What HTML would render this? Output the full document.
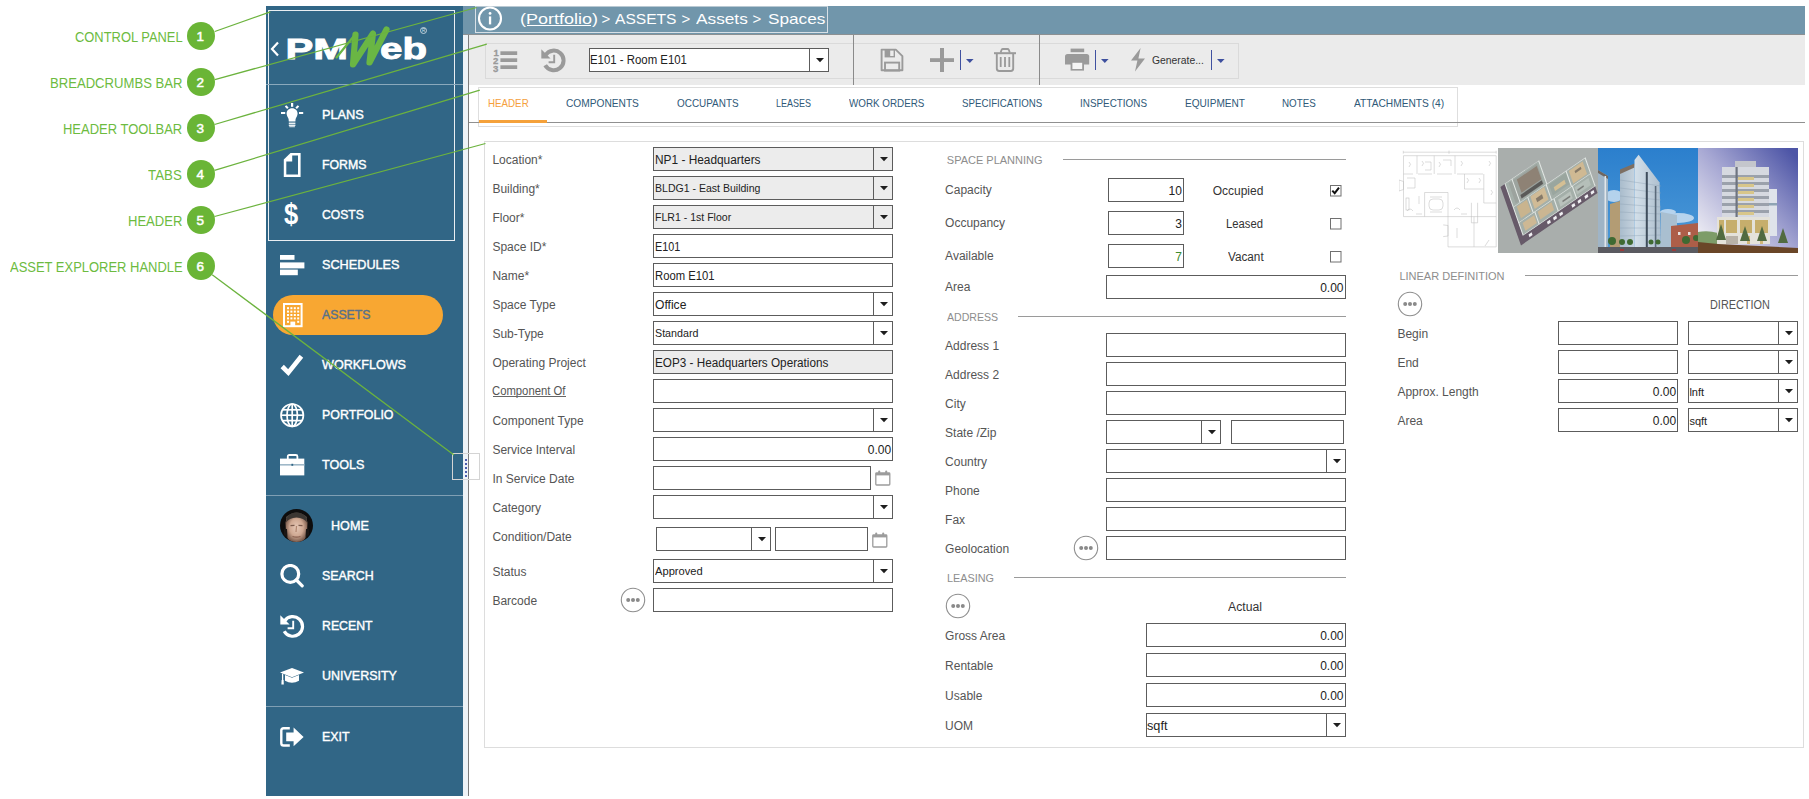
<!DOCTYPE html>
<html><head><meta charset="utf-8"><title>PMWeb Spaces</title>
<style>
*{box-sizing:border-box;margin:0;padding:0}
html,body{width:1809px;height:799px;overflow:hidden;background:#fff;font-family:"Liberation Sans",sans-serif}
.a{position:absolute}
.t{position:absolute;white-space:pre;font-family:"Liberation Sans",sans-serif}
svg{display:block}
</style></head><body>
<div class="t" style="font-size:14px;font-weight:normal;color:#6dbb3f;line-height:16px;top:29.45px;transform:scaleX(0.9223);transform-origin:0 50%;left:74.50px;">CONTROL PANEL</div>
<div class="t" style="font-size:14px;font-weight:normal;color:#6dbb3f;line-height:16px;top:75.45px;transform:scaleX(0.9354);transform-origin:0 50%;left:49.70px;">BREADCRUMBS BAR</div>
<div class="t" style="font-size:14px;font-weight:normal;color:#6dbb3f;line-height:16px;top:121.45px;transform:scaleX(0.9269);transform-origin:0 50%;left:62.90px;">HEADER TOOLBAR</div>
<div class="t" style="font-size:14px;font-weight:normal;color:#6dbb3f;line-height:16px;top:167.45px;transform:scaleX(0.9503);transform-origin:0 50%;left:148.40px;">TABS</div>
<div class="t" style="font-size:14px;font-weight:normal;color:#6dbb3f;line-height:16px;top:213.45px;transform:scaleX(0.9312);transform-origin:0 50%;left:127.80px;">HEADER</div>
<div class="t" style="font-size:14px;font-weight:normal;color:#6dbb3f;line-height:16px;top:259.45px;transform:scaleX(0.9257);transform-origin:0 50%;left:9.50px;">ASSET EXPLORER HANDLE</div>
<div class="a" style="left:187px;top:21.9px;width:28px;height:28px;border-radius:50%;background:#6ab536"></div>
<div class="t" style="font-size:13.5px;font-weight:normal;color:#fff;line-height:16px;top:29.34px;left:196.60px;-webkit-text-stroke:0.5px #fff;">1</div>
<div class="a" style="left:187px;top:67.9px;width:28px;height:28px;border-radius:50%;background:#6ab536"></div>
<div class="t" style="font-size:13.5px;font-weight:normal;color:#fff;line-height:16px;top:75.34px;left:196.60px;-webkit-text-stroke:0.5px #fff;">2</div>
<div class="a" style="left:187px;top:113.9px;width:28px;height:28px;border-radius:50%;background:#6ab536"></div>
<div class="t" style="font-size:13.5px;font-weight:normal;color:#fff;line-height:16px;top:121.34px;left:196.60px;-webkit-text-stroke:0.5px #fff;">3</div>
<div class="a" style="left:187px;top:159.9px;width:28px;height:28px;border-radius:50%;background:#6ab536"></div>
<div class="t" style="font-size:13.5px;font-weight:normal;color:#fff;line-height:16px;top:167.34px;left:196.60px;-webkit-text-stroke:0.5px #fff;">4</div>
<div class="a" style="left:187px;top:205.9px;width:28px;height:28px;border-radius:50%;background:#6ab536"></div>
<div class="t" style="font-size:13.5px;font-weight:normal;color:#fff;line-height:16px;top:213.34px;left:196.60px;-webkit-text-stroke:0.5px #fff;">5</div>
<div class="a" style="left:187px;top:251.89999999999998px;width:28px;height:28px;border-radius:50%;background:#6ab536"></div>
<div class="t" style="font-size:13.5px;font-weight:normal;color:#fff;line-height:16px;top:259.34px;left:196.60px;-webkit-text-stroke:0.5px #fff;">6</div>
<div class="a" style="left:266px;top:6px;width:197.8px;height:790px;background:#316686;"></div>
<div class="a" style="left:267.5px;top:10px;width:187.5px;height:230.5px;background:transparent;border:1.2px solid #e9eef2;"></div>
<div class="a" style="left:266px;top:84px;width:197px;height:1px;background:#8aa9bc;"></div>
<div class="a" style="left:266px;top:495px;width:197px;height:1px;background:#7f9fb4;"></div>
<div class="a" style="left:266px;top:706px;width:197px;height:1px;background:#7f9fb4;"></div>
<svg class="a" style="left:269.5px;top:41.3px;" width="10" height="16" viewBox="0 0 10 16"><path d="M8 1.5 L2 8 L8 14.5" fill="none" stroke="#ffffff" stroke-width="2.2"/></svg>
<svg class="a" style="left:286.5px;top:37px;overflow:visible" width="145" height="40" viewBox="0 0 145 40"><text x="-1.6" y="22" font-family="Liberation Sans" font-weight="bold" font-size="30" fill="#ffffff" stroke="#ffffff" stroke-width="0.9" textLength="62.5" lengthAdjust="spacingAndGlyphs">PM</text>
<path d="M49.5 20.5 L68.5 -3" stroke="#6ab644" stroke-width="2.2" fill="none" stroke-linecap="round"/>
<path d="M68.5 -2.5 L66 27.5 L86 -3.5 L82.5 25.5 L99.5 -7.5" stroke="#6ab644" stroke-width="6.2" fill="none" stroke-linejoin="round" stroke-linecap="round"/>
<text x="93" y="22" font-family="Liberation Sans" font-weight="bold" font-size="30" fill="#ffffff" stroke="#ffffff" stroke-width="0.9" textLength="47" lengthAdjust="spacingAndGlyphs">eb</text>
<circle cx="136.5" cy="-6.5" r="3" fill="none" stroke="#dfe8ee" stroke-width="0.8"/>
<text x="136.5" y="-4.8" text-anchor="middle" font-family="Liberation Sans" font-size="4.5" fill="#dfe8ee">R</text></svg>
<div class="a" style="left:273px;top:295px;width:170px;height:40px;border-radius:20px;background:#f8a732"></div>
<svg class="a" style="left:278px;top:100px;" width="28" height="30" viewBox="0 0 28 30"><g fill="#ffffff" stroke="none">
<rect x="13" y="3" width="2.2" height="3.8"/>
<rect x="3" y="12" width="4.2" height="2"/>
<rect x="21" y="12" width="4.2" height="2"/>
<path d="M6.8 6.6 L8.3 5.2 L10.6 7.6 L9.1 9 Z"/>
<path d="M21.2 6.6 L19.7 5.2 L17.4 7.6 L18.9 9 Z"/>
<path d="M14.1 8.2 C10.9 8.2 8.6 10.6 8.6 13.6 C8.6 16.0 10.0 17.3 10.6 19.0 L10.8 21.5 L17.4 21.5 L17.6 19.0 C18.2 17.3 19.6 16.0 19.6 13.6 C19.6 10.6 17.3 8.2 14.1 8.2 Z"/>
<rect x="10.8" y="22.6" width="6.6" height="1.3"/>
<rect x="10.8" y="24.6" width="6.6" height="1.3"/>
<rect x="11.3" y="26.3" width="5.6" height="0.9"/>
</g></svg>
<svg class="a" style="left:280px;top:150px;" width="24" height="30" viewBox="0 0 24 30"><path d="M3.8 9.4 L10.5 3 L20.6 3 L20.6 27.1 L3.8 27.1 Z" fill="#ffffff"/>
<path d="M12.2 5.6 L18 5.6 L18 24.4 L6.3 24.4 L6.3 11.6 L12.2 11.6 Z" fill="#316686"/></svg>
<svg class="a" style="left:279px;top:200px;" width="24" height="30" viewBox="0 0 24 30"><text x="12" y="24" text-anchor="middle" font-family="Liberation Sans" font-weight="bold" font-size="30" fill="#ffffff" transform="translate(12 0) scale(0.85 1) translate(-12 0)">$</text></svg>
<svg class="a" style="left:279.7px;top:254.6px;" width="25" height="21" viewBox="0 0 25 21"><g fill="#ffffff"><rect x="0" y="0" width="14.5" height="4.8"/><rect x="0" y="7.4" width="24.4" height="6"/><rect x="0" y="14.6" width="17.8" height="5.6"/></g></svg>
<svg class="a" style="left:282.8px;top:302.9px;" width="20" height="25" viewBox="0 0 20 25"><rect x="1" y="1" width="17.6" height="22.2" fill="none" stroke="#ffffff" stroke-width="2"/>
<g fill="#ffffff"><rect x="4.0" y="4.2" width="2" height="2"/><rect x="7.4" y="4.2" width="2" height="2"/><rect x="10.8" y="4.2" width="2" height="2"/><rect x="14.2" y="4.2" width="2" height="2"/><rect x="4.0" y="7.6" width="2" height="2"/><rect x="7.4" y="7.6" width="2" height="2"/><rect x="10.8" y="7.6" width="2" height="2"/><rect x="14.2" y="7.6" width="2" height="2"/><rect x="4.0" y="11.0" width="2" height="2"/><rect x="7.4" y="11.0" width="2" height="2"/><rect x="10.8" y="11.0" width="2" height="2"/><rect x="14.2" y="11.0" width="2" height="2"/><rect x="4.0" y="14.4" width="2" height="2"/><rect x="7.4" y="14.4" width="2" height="2"/><rect x="10.8" y="14.4" width="2" height="2"/><rect x="14.2" y="14.4" width="2" height="2"/><rect x="4.0" y="17.8" width="2" height="2"/><rect x="14.2" y="17.8" width="2" height="2"/><rect x="7.4" y="18.6" width="4.8" height="5"/></g></svg>
<svg class="a" style="left:279.5px;top:353px;" width="24" height="24" viewBox="0 0 24 24"><path d="M2.2 13.5 L8.3 19.6 L21.4 3.2" fill="none" stroke="#ffffff" stroke-width="4.6" stroke-linejoin="miter" stroke-linecap="butt"/></svg>
<svg class="a" style="left:279.8px;top:402.8px;" width="25" height="25" viewBox="0 0 25 25"><g fill="none" stroke="#ffffff" stroke-width="1.7">
<circle cx="12.2" cy="12.2" r="11.2"/>
<ellipse cx="12.2" cy="12.2" rx="5.2" ry="11.2"/>
<line x1="12.2" y1="1" x2="12.2" y2="23.4"/>
<line x1="1" y1="12.2" x2="23.4" y2="12.2"/>
<line x1="2.6" y1="6.8" x2="21.8" y2="6.8"/>
<line x1="2.6" y1="17.6" x2="21.8" y2="17.6"/>
</g></svg>
<svg class="a" style="left:279.9px;top:454.2px;" width="25" height="22" viewBox="0 0 25 22"><path d="M7.8 5 L7.8 2.5 Q7.8 1 9.3 1 L15.9 1 Q17.4 1 17.4 2.5 L17.4 5" fill="none" stroke="#ffffff" stroke-width="1.8"/>
<rect x="0" y="4.6" width="24.3" height="16.8" fill="#ffffff"/>
<rect x="0" y="10" width="24.3" height="1.6" fill="#9fb8c8"/>
<rect x="11.4" y="9.8" width="1.8" height="2" fill="#316686"/></svg>
<svg class="a" style="left:280px;top:508.8px;" width="33" height="33" viewBox="0 0 33 33"><defs><radialGradient id="face" cx="50%" cy="45%" r="55%"><stop offset="0" stop-color="#e6c8b6"/><stop offset="0.55" stop-color="#cfa892"/><stop offset="1" stop-color="#6e5042"/></radialGradient>
<clipPath id="avc"><circle cx="16.5" cy="16.5" r="16.5"/></clipPath></defs>
<g clip-path="url(#avc)">
<rect width="33" height="33" fill="#0e0d0d"/>
<path d="M6 8 Q16.5 -1 27 8 L26 14 Q16.5 6 7 14 Z" fill="#4a4540"/>
<path d="M5.5 14 Q5 6.5 16.5 5.8 Q28 6.5 27.5 14 L27 24 Q26 33 16.5 34 Q7 33 6 24 Z" fill="url(#face)"/>
<path d="M6 13.5 Q6 4 16.5 3.5 Q27 4 27 13.5 Q24 9 16.5 8.6 Q9 9 6 13.5Z" fill="#3b3632"/>
<path d="M10.5 16.6 L14.5 16.4 M18.5 16.4 L22.5 16.6" stroke="#7a5a4c" stroke-width="1.2"/>
<path d="M16.5 17 L16 23" stroke="#b08670" stroke-width="1.2"/>
<path d="M12.5 27.5 Q16.5 28.8 20.5 27.5" stroke="#8a6050" stroke-width="1.2" fill="none"/>
<path d="M4 20 L7 20 L7.5 28 L4 26Z M29 20 L26 20 L25.5 28 L29 26Z" fill="#1a1614"/>
</g></svg>
<svg class="a" style="left:280px;top:564px;" width="24" height="24" viewBox="0 0 24 24"><circle cx="10.3" cy="9.9" r="8.4" fill="none" stroke="#ffffff" stroke-width="3.2"/>
<line x1="16.4" y1="16" x2="22.2" y2="21.8" stroke="#ffffff" stroke-width="3.2" stroke-linecap="round"/></svg>
<svg class="a" style="left:279.8px;top:614.3px;" width="25" height="25" viewBox="0 0 25 25"><path d="M4.6 7.0 A9.8 9.8 0 1 1 4.2 17.2" fill="none" stroke="#ffffff" stroke-width="3.2"/>
<path d="M0.3 1.2 L0.3 10.4 L9.6 10.4 Z" fill="#ffffff"/>
<path d="M13.2 6.8 L13.2 14.2 L7.6 14.2" fill="none" stroke="#ffffff" stroke-width="1.9"/></svg>
<svg class="a" style="left:280px;top:667.8px;" width="24" height="17" viewBox="0 0 24 17"><path d="M0 4.6 L12 0 L24 4.6 L12 9.2 Z" fill="#ffffff"/>
<path d="M5 7 L5 12.8 Q12 16.8 19 12.8 L19 7 L12 9.8 Z" fill="#ffffff"/>
<path d="M2.6 5.6 L2.6 12.6" stroke="#ffffff" stroke-width="1.3"/>
<path d="M1.6 12 L3.6 12 L3.8 16.4 L1.4 16.4 Z" fill="#ffffff"/></svg>
<svg class="a" style="left:280px;top:727px;" width="24" height="20" viewBox="0 0 24 20"><path d="M9.8 1.3 L3.6 1.3 Q1.3 1.3 1.3 3.6 L1.3 16.2 Q1.3 18.5 3.6 18.5 L9.8 18.5" fill="none" stroke="#ffffff" stroke-width="2.4"/>
<path d="M6.2 5.6 L13.6 5.6 L13.6 0.6 L23.6 9.9 L13.6 19.2 L13.6 14.2 L6.2 14.2 Z" fill="#ffffff"/></svg>
<div class="t" style="font-size:12.8px;font-weight:normal;color:#fff;line-height:16px;top:106.73px;left:321.90px;-webkit-text-stroke:0.4px #fff;">PLANS</div>
<div class="t" style="font-size:12.8px;font-weight:normal;color:#fff;line-height:16px;top:156.73px;transform:scaleX(0.9625);transform-origin:0 50%;left:321.90px;-webkit-text-stroke:0.4px #fff;">FORMS</div>
<div class="t" style="font-size:12.8px;font-weight:normal;color:#fff;line-height:16px;top:206.53px;transform:scaleX(0.9473);transform-origin:0 50%;left:321.90px;-webkit-text-stroke:0.4px #fff;">COSTS</div>
<div class="t" style="font-size:12.8px;font-weight:normal;color:#fff;line-height:16px;top:256.73px;transform:scaleX(0.9908);transform-origin:0 50%;left:321.90px;-webkit-text-stroke:0.4px #fff;">SCHEDULES</div>
<div class="t" style="font-size:12.8px;font-weight:normal;color:#56708c;line-height:16px;top:306.73px;transform:scaleX(0.9601);transform-origin:0 50%;left:321.90px;-webkit-text-stroke:0.4px #56708c;">ASSETS</div>
<div class="t" style="font-size:12.8px;font-weight:normal;color:#fff;line-height:16px;top:356.73px;transform:scaleX(0.9847);transform-origin:0 50%;left:321.90px;-webkit-text-stroke:0.4px #fff;">WORKFLOWS</div>
<div class="t" style="font-size:12.8px;font-weight:normal;color:#fff;line-height:16px;top:406.73px;transform:scaleX(0.9698);transform-origin:0 50%;left:321.90px;-webkit-text-stroke:0.4px #fff;">PORTFOLIO</div>
<div class="t" style="font-size:12.8px;font-weight:normal;color:#fff;line-height:16px;top:456.73px;transform:scaleX(0.9850);transform-origin:0 50%;left:321.90px;-webkit-text-stroke:0.4px #fff;">TOOLS</div>
<div class="t" style="font-size:12.8px;font-weight:normal;color:#fff;line-height:16px;top:517.63px;transform:scaleX(0.9844);transform-origin:0 50%;left:331.20px;-webkit-text-stroke:0.4px #fff;">HOME</div>
<div class="t" style="font-size:12.8px;font-weight:normal;color:#fff;line-height:16px;top:567.73px;transform:scaleX(0.9710);transform-origin:0 50%;left:321.80px;-webkit-text-stroke:0.4px #fff;">SEARCH</div>
<div class="t" style="font-size:12.8px;font-weight:normal;color:#fff;line-height:16px;top:617.83px;transform:scaleX(0.9612);transform-origin:0 50%;left:321.80px;-webkit-text-stroke:0.4px #fff;">RECENT</div>
<div class="t" style="font-size:12.8px;font-weight:normal;color:#fff;line-height:16px;top:667.93px;transform:scaleX(0.9753);transform-origin:0 50%;left:321.80px;-webkit-text-stroke:0.4px #fff;">UNIVERSITY</div>
<div class="t" style="font-size:12.8px;font-weight:normal;color:#fff;line-height:16px;top:728.73px;transform:scaleX(0.9698);transform-origin:0 50%;left:321.80px;-webkit-text-stroke:0.4px #fff;">EXIT</div>
<div class="a" style="left:463.2px;top:35px;width:4.8px;height:761px;background:#eef3f7;"></div>
<div class="a" style="left:468px;top:35px;width:1px;height:761px;background:#7d7d7d;"></div>
<div class="a" style="left:463px;top:6px;width:1342px;height:28.5px;background:#7196ab;"></div>
<div class="a" style="left:463px;top:34px;width:1342px;height:1px;background:#8c9092;"></div>
<div class="a" style="left:474.5px;top:6px;width:353.5px;height:27px;background:transparent;border:1px solid #d8e0e6;border-top-color:#b9c9d3"></div>
<svg class="a" style="left:477px;top:5.5px" width="26" height="26"><circle cx="13" cy="12.5" r="11" fill="none" stroke="#fff" stroke-width="2.1"/><rect x="11.9" y="10.4" width="2.3" height="8" fill="#fff"/><circle cx="13.05" cy="7.4" r="1.4" fill="#fff"/></svg>
<div class="t" style="font-size:15px;font-weight:normal;color:#ffffff;line-height:16px;top:11.27px;transform:scaleX(1.1985);transform-origin:0 50%;left:519.90px;">(Portfolio)</div>
<div class="a" style="left:527px;top:25px;width:64px;height:1.2px;background:#fff"></div>
<div class="t" style="font-size:15px;font-weight:normal;color:#ffffff;line-height:16px;top:11.27px;left:601.40px;">&gt;</div>
<div class="t" style="font-size:15px;font-weight:normal;color:#ffffff;line-height:16px;top:11.27px;transform:scaleX(1.0382);transform-origin:0 50%;left:615.20px;">ASSETS</div>
<div class="t" style="font-size:15px;font-weight:normal;color:#ffffff;line-height:16px;top:11.27px;left:681.40px;">&gt;</div>
<div class="t" style="font-size:15px;font-weight:normal;color:#ffffff;line-height:16px;top:11.27px;transform:scaleX(1.1503);transform-origin:0 50%;left:696.00px;">Assets</div>
<div class="t" style="font-size:15px;font-weight:normal;color:#ffffff;line-height:16px;top:11.27px;left:752.40px;">&gt;</div>
<div class="t" style="font-size:15px;font-weight:normal;color:#ffffff;line-height:16px;top:11.27px;transform:scaleX(1.1464);transform-origin:0 50%;left:767.70px;">Spaces</div>
<div class="a" style="left:469px;top:35px;width:1336px;height:50px;background:#ebebeb;"></div>
<div class="a" style="left:485.4px;top:43.3px;width:753.6px;height:36px;background:transparent;border:1px solid #dadada;"></div>
<div class="a" style="left:853px;top:35px;width:1px;height:50px;background:#8a8a8a;"></div>
<div class="a" style="left:1038.5px;top:35px;width:1px;height:50px;background:#8a8a8a;"></div>
<svg class="a" style="left:493px;top:48px;" width="25" height="25" viewBox="0 0 25 25"><g fill="#9a9a9a" font-family="Liberation Sans" font-weight="bold" font-size="9.6" stroke="#9a9a9a" stroke-width="0.3">
<text x="0.6" y="7.6">1</text>
<text x="0" y="15.6">2</text>
<text x="0" y="23.8">3</text>
</g>
<g fill="#9a9a9a">
<rect x="7.4" y="3.3" width="16.8" height="3.7"/>
<rect x="7.4" y="10.3" width="16.8" height="3.7"/>
<rect x="7.4" y="17.3" width="16.8" height="3.7"/>
</g></svg>
<svg class="a" style="left:541px;top:47.6px;" width="25" height="25" viewBox="0 0 25 25"><path d="M4.6 7.0 A9.8 9.8 0 1 1 4.2 17.2" fill="none" stroke="#9a9a9a" stroke-width="4"/>
<path d="M0.3 1.2 L0.3 10.4 L9.6 10.4 Z" fill="#9a9a9a"/>
<path d="M13.2 6.8 L13.2 14.2 L7.6 14.2" fill="none" stroke="#9a9a9a" stroke-width="1.9"/></svg>
<div class="a" style="left:589px;top:48px;width:240px;height:24px;background:#fff;border:1px solid #5c5c5c"></div>
<div class="a" style="left:809px;top:48px;width:1px;height:24px;background:#5c5c5c"></div>
<svg class="a" style="left:815.5px;top:58px" width="8" height="5"><path d="M0 0 L8 0 L4 4.2 Z" fill="#1e1e1e"/></svg>
<div class="t" style="font-size:12px;font-weight:normal;color:#222;line-height:16px;top:52.22px;transform:scaleX(0.9495);transform-origin:0 50%;left:590.40px;">E101 - Room E101</div>
<svg class="a" style="left:880px;top:48px;" width="24" height="24" viewBox="0 0 24 24"><path d="M1.6 1.6 L15.8 1.6 L22.4 8.2 L22.4 22.2 L1.6 22.2 Z" fill="none" stroke="#9a9a9a" stroke-width="1.9" stroke-linejoin="round"/>
<path d="M4.6 1.6 L15 1.6 L15 9.4 L4.6 9.4 Z" fill="#9a9a9a"/>
<rect x="10.2" y="2.6" width="3.4" height="5.4" fill="#ececec"/>
<rect x="5" y="14.6" width="14.2" height="8" fill="none" stroke="#9a9a9a" stroke-width="1.9"/></svg>
<svg class="a" style="left:930px;top:48px;" width="24" height="24" viewBox="0 0 24 24"><rect x="10" y="0" width="4" height="24" fill="#9a9a9a"/><rect x="0" y="10.2" width="24" height="3.8" fill="#9a9a9a"/></svg>
<div class="a" style="left:960px;top:50px;width:1.2px;height:20px;background:#3f51a0"></div><svg class="a" style="left:966.4px;top:59px" width="8" height="4"><path d="M0 0 L7.6 0 L3.8 4 Z" fill="#3d4f9e"/></svg>
<svg class="a" style="left:994px;top:48.4px;" width="22" height="24" viewBox="0 0 22 24"><path d="M6.6 4.6 L7.6 1.8 Q8 1 9 1 L13.4 1 Q14.4 1 14.8 1.8 L15.8 4.6" fill="none" stroke="#9a9a9a" stroke-width="1.8"/>
<rect x="0" y="4.2" width="22" height="2" fill="#9a9a9a"/>
<path d="M2.8 6 L2.8 20.6 Q2.8 23 5.2 23 L16.8 23 Q19.2 23 19.2 20.6 L19.2 6" fill="none" stroke="#9a9a9a" stroke-width="1.9"/>
<rect x="5.8" y="9" width="1.8" height="10" fill="#9a9a9a"/><rect x="10.1" y="9" width="1.8" height="10" fill="#9a9a9a"/><rect x="14.4" y="9" width="1.8" height="10" fill="#9a9a9a"/></svg>
<svg class="a" style="left:1064.8px;top:48.4px;" width="25" height="24" viewBox="0 0 25 24"><rect x="5.6" y="0.6" width="13.6" height="3.6" fill="#9a9a9a"/>
<path d="M0 8.6 Q0 6 2.6 6 L21.6 6 Q24.2 6 24.2 8.6 L24.2 16.6 L0 16.6 Z" fill="#9a9a9a"/>
<rect x="5.6" y="13.2" width="13.4" height="9.4" fill="#9a9a9a"/>
<rect x="7.4" y="14.8" width="9.8" height="6.2" fill="#f4f4f4"/></svg>
<div class="a" style="left:1095px;top:50px;width:1.2px;height:20px;background:#3f51a0"></div><svg class="a" style="left:1101.4px;top:59px" width="8" height="4"><path d="M0 0 L7.6 0 L3.8 4 Z" fill="#3d4f9e"/></svg>
<svg class="a" style="left:1131px;top:48.2px;" width="15" height="24" viewBox="0 0 15 24"><path d="M9.6 0 L0 12.4 L6.4 12.4 L4 23.4 L14 10.6 L7.4 10.6 Z" fill="#9a9a9a"/></svg>
<div class="t" style="font-size:11.5px;font-weight:normal;color:#333;line-height:16px;top:52.21px;transform:scaleX(0.9006);transform-origin:0 50%;left:1152.40px;">Generate...</div>
<div class="a" style="left:1211px;top:50px;width:1.2px;height:20px;background:#3f51a0"></div><svg class="a" style="left:1217.4px;top:59px" width="8" height="4"><path d="M0 0 L7.6 0 L3.8 4 Z" fill="#3d4f9e"/></svg>
<div class="a" style="left:478.3px;top:87px;width:980px;height:40px;background:#fff;border:1px solid #dedede;"></div>
<div class="a" style="left:469px;top:122px;width:1336px;height:1.3px;background:#909090;"></div>
<div class="a" style="left:479px;top:119.5px;width:68px;height:3px;background:#f5a13a;"></div>
<div class="t" style="font-size:11px;font-weight:normal;color:#f5a03c;line-height:16px;top:95.20px;transform:scaleX(0.8874);transform-origin:0 50%;left:487.70px;">HEADER</div>
<div class="t" style="font-size:11px;font-weight:normal;color:#2f5978;line-height:16px;top:95.20px;transform:scaleX(0.9248);transform-origin:0 50%;left:565.90px;">COMPONENTS</div>
<div class="t" style="font-size:11px;font-weight:normal;color:#2f5978;line-height:16px;top:95.20px;transform:scaleX(0.9025);transform-origin:0 50%;left:676.70px;">OCCUPANTS</div>
<div class="t" style="font-size:11px;font-weight:normal;color:#2f5978;line-height:16px;top:95.20px;transform:scaleX(0.8204);transform-origin:0 50%;left:776.00px;">LEASES</div>
<div class="t" style="font-size:11px;font-weight:normal;color:#2f5978;line-height:16px;top:95.20px;transform:scaleX(0.8938);transform-origin:0 50%;left:848.80px;">WORK ORDERS</div>
<div class="t" style="font-size:11px;font-weight:normal;color:#2f5978;line-height:16px;top:95.20px;transform:scaleX(0.8823);transform-origin:0 50%;left:962.00px;">SPECIFICATIONS</div>
<div class="t" style="font-size:11px;font-weight:normal;color:#2f5978;line-height:16px;top:95.20px;transform:scaleX(0.8983);transform-origin:0 50%;left:1079.70px;">INSPECTIONS</div>
<div class="t" style="font-size:11px;font-weight:normal;color:#2f5978;line-height:16px;top:95.20px;transform:scaleX(0.9175);transform-origin:0 50%;left:1184.70px;">EQUIPMENT</div>
<div class="t" style="font-size:11px;font-weight:normal;color:#2f5978;line-height:16px;top:95.20px;transform:scaleX(0.8913);transform-origin:0 50%;left:1282.20px;">NOTES</div>
<div class="t" style="font-size:11px;font-weight:normal;color:#2f5978;line-height:16px;top:95.20px;transform:scaleX(0.9254);transform-origin:0 50%;left:1353.60px;">ATTACHMENTS (4)</div>
<div class="a" style="left:484px;top:141px;width:1320px;height:607px;background:#fff;border:1px solid #dddddd;"></div>
<div class="t" style="font-size:12px;font-weight:normal;color:#555;line-height:16px;top:151.72px;left:492.40px;">Location*</div>
<div class="a" style="left:653px;top:147px;width:240px;height:24px;background:#ececec;border:1px solid #5c5c5c"></div>
<div class="a" style="left:873px;top:147px;width:1px;height:24px;background:#5c5c5c"></div>
<svg class="a" style="left:879.5px;top:157px" width="8" height="5"><path d="M0 0 L8 0 L4 4.2 Z" fill="#1e1e1e"/></svg>
<div class="t" style="font-size:12px;font-weight:normal;color:#222;line-height:16px;top:151.72px;transform:scaleX(0.9890);transform-origin:0 50%;left:654.80px;">NP1 - Headquarters</div>
<div class="t" style="font-size:12px;font-weight:normal;color:#555;line-height:16px;top:180.72px;left:492.40px;">Building*</div>
<div class="a" style="left:653px;top:176px;width:240px;height:24px;background:#ececec;border:1px solid #5c5c5c"></div>
<div class="a" style="left:873px;top:176px;width:1px;height:24px;background:#5c5c5c"></div>
<svg class="a" style="left:879.5px;top:186px" width="8" height="5"><path d="M0 0 L8 0 L4 4.2 Z" fill="#1e1e1e"/></svg>
<div class="t" style="font-size:11px;font-weight:normal;color:#222;line-height:16px;top:180.20px;transform:scaleX(0.9580);transform-origin:0 50%;left:654.80px;">BLDG1 - East Building</div>
<div class="t" style="font-size:12px;font-weight:normal;color:#555;line-height:16px;top:209.72px;left:492.40px;">Floor*</div>
<div class="a" style="left:653px;top:205px;width:240px;height:24px;background:#ececec;border:1px solid #5c5c5c"></div>
<div class="a" style="left:873px;top:205px;width:1px;height:24px;background:#5c5c5c"></div>
<svg class="a" style="left:879.5px;top:215px" width="8" height="5"><path d="M0 0 L8 0 L4 4.2 Z" fill="#1e1e1e"/></svg>
<div class="t" style="font-size:11px;font-weight:normal;color:#222;line-height:16px;top:209.20px;transform:scaleX(0.9582);transform-origin:0 50%;left:654.80px;">FLR1 - 1st Floor</div>
<div class="t" style="font-size:12px;font-weight:normal;color:#555;line-height:16px;top:238.72px;left:492.40px;">Space ID*</div>
<div class="a" style="left:653px;top:234px;width:240px;height:24px;background:#fff;border:1px solid #5c5c5c"></div>
<div class="t" style="font-size:12px;font-weight:normal;color:#222;line-height:16px;top:238.72px;transform:scaleX(0.8976);transform-origin:0 50%;left:654.80px;">E101</div>
<div class="t" style="font-size:12px;font-weight:normal;color:#555;line-height:16px;top:267.72px;left:492.40px;">Name*</div>
<div class="a" style="left:653px;top:263px;width:240px;height:24px;background:#fff;border:1px solid #5c5c5c"></div>
<div class="t" style="font-size:12px;font-weight:normal;color:#222;line-height:16px;top:267.72px;transform:scaleX(0.9389);transform-origin:0 50%;left:654.80px;">Room E101</div>
<div class="t" style="font-size:12px;font-weight:normal;color:#555;line-height:16px;top:296.72px;left:492.40px;">Space Type</div>
<div class="a" style="left:653px;top:292px;width:240px;height:24px;background:#fff;border:1px solid #5c5c5c"></div>
<div class="a" style="left:873px;top:292px;width:1px;height:24px;background:#5c5c5c"></div>
<svg class="a" style="left:879.5px;top:302px" width="8" height="5"><path d="M0 0 L8 0 L4 4.2 Z" fill="#1e1e1e"/></svg>
<div class="t" style="font-size:12px;font-weight:normal;color:#222;line-height:16px;top:296.72px;transform:scaleX(1.0078);transform-origin:0 50%;left:654.80px;">Office</div>
<div class="t" style="font-size:12px;font-weight:normal;color:#555;line-height:16px;top:325.72px;left:492.40px;">Sub-Type</div>
<div class="a" style="left:653px;top:321px;width:240px;height:24px;background:#fff;border:1px solid #5c5c5c"></div>
<div class="a" style="left:873px;top:321px;width:1px;height:24px;background:#5c5c5c"></div>
<svg class="a" style="left:879.5px;top:331px" width="8" height="5"><path d="M0 0 L8 0 L4 4.2 Z" fill="#1e1e1e"/></svg>
<div class="t" style="font-size:11px;font-weight:normal;color:#222;line-height:16px;top:325.20px;transform:scaleX(0.9731);transform-origin:0 50%;left:654.80px;">Standard</div>
<div class="t" style="font-size:12px;font-weight:normal;color:#555;line-height:16px;top:354.72px;left:492.40px;">Operating Project</div>
<div class="a" style="left:653px;top:350px;width:240px;height:24px;background:#ececec;border:1px solid #5c5c5c"></div>
<div class="t" style="font-size:12px;font-weight:normal;color:#222;line-height:16px;top:354.72px;transform:scaleX(0.9770);transform-origin:0 50%;left:654.80px;">EOP3 - Headquarters Operations</div>
<div class="t" style="font-size:12px;font-weight:normal;color:#555;line-height:16px;top:383.22px;transform:scaleX(0.9405);transform-origin:0 50%;left:492.40px;">Component Of</div>
<div class="a" style="left:653px;top:379px;width:240px;height:24px;background:#fff;border:1px solid #5c5c5c"></div>
<div class="t" style="font-size:12px;font-weight:normal;color:#555;line-height:16px;top:412.72px;left:492.40px;">Component Type</div>
<div class="a" style="left:653px;top:408px;width:240px;height:24px;background:#fff;border:1px solid #5c5c5c"></div>
<div class="a" style="left:873px;top:408px;width:1px;height:24px;background:#5c5c5c"></div>
<svg class="a" style="left:879.5px;top:418px" width="8" height="5"><path d="M0 0 L8 0 L4 4.2 Z" fill="#1e1e1e"/></svg>
<div class="t" style="font-size:12px;font-weight:normal;color:#555;line-height:16px;top:441.72px;left:492.40px;">Service Interval</div>
<div class="a" style="left:653px;top:437px;width:240px;height:24px;background:#fff;border:1px solid #5c5c5c"></div>
<div class="t" style="font-size:12px;font-weight:normal;color:#222;line-height:16px;top:441.72px;right:917.80px;">0.00</div>
<div class="t" style="font-size:12px;font-weight:normal;color:#555;line-height:16px;top:470.72px;left:492.40px;">In Service Date</div>
<div class="a" style="left:653px;top:466px;width:218px;height:24px;background:#fff;border:1px solid #5c5c5c"></div>
<svg class="a" style="left:875px;top:469.6px;" width="16" height="16" viewBox="0 0 16 16"><rect x="0.8" y="3" width="14" height="12" rx="0.8" fill="none" stroke="#9c9c9c" stroke-width="1.3"/>
<rect x="0.8" y="3" width="14" height="2.4" fill="#9c9c9c"/>
<rect x="3.2" y="0.6" width="2" height="4" rx="1" fill="#9c9c9c"/><rect x="10.2" y="0.6" width="2" height="4" rx="1" fill="#9c9c9c"/></svg>
<div class="t" style="font-size:12px;font-weight:normal;color:#555;line-height:16px;top:499.72px;left:492.40px;">Category</div>
<div class="a" style="left:653px;top:495px;width:240px;height:24px;background:#fff;border:1px solid #5c5c5c"></div>
<div class="a" style="left:873px;top:495px;width:1px;height:24px;background:#5c5c5c"></div>
<svg class="a" style="left:879.5px;top:505px" width="8" height="5"><path d="M0 0 L8 0 L4 4.2 Z" fill="#1e1e1e"/></svg>
<div class="a" style="left:493px;top:396px;width:72.5px;height:1px;background:#666"></div>
<div class="t" style="font-size:12px;font-weight:normal;color:#555;line-height:16px;top:529.22px;left:492.40px;">Condition/Date</div>
<div class="a" style="left:656px;top:527px;width:115px;height:24px;background:#fff;border:1px solid #5c5c5c"></div>
<div class="a" style="left:751px;top:527px;width:1px;height:24px;background:#5c5c5c"></div>
<svg class="a" style="left:757.5px;top:537px" width="8" height="5"><path d="M0 0 L8 0 L4 4.2 Z" fill="#1e1e1e"/></svg>
<div class="a" style="left:775px;top:527px;width:93px;height:24px;background:#fff;border:1px solid #5c5c5c"></div>
<svg class="a" style="left:872px;top:531.5px;" width="16" height="16" viewBox="0 0 16 16"><rect x="0.8" y="3" width="14" height="12" rx="0.8" fill="none" stroke="#9c9c9c" stroke-width="1.3"/>
<rect x="0.8" y="3" width="14" height="2.4" fill="#9c9c9c"/>
<rect x="3.2" y="0.6" width="2" height="4" rx="1" fill="#9c9c9c"/><rect x="10.2" y="0.6" width="2" height="4" rx="1" fill="#9c9c9c"/></svg>
<div class="t" style="font-size:12px;font-weight:normal;color:#555;line-height:16px;top:563.72px;left:492.40px;">Status</div>
<div class="a" style="left:653px;top:559px;width:240px;height:24px;background:#fff;border:1px solid #5c5c5c"></div>
<div class="a" style="left:873px;top:559px;width:1px;height:24px;background:#5c5c5c"></div>
<svg class="a" style="left:879.5px;top:569px" width="8" height="5"><path d="M0 0 L8 0 L4 4.2 Z" fill="#1e1e1e"/></svg>
<div class="t" style="font-size:11px;font-weight:normal;color:#222;line-height:16px;top:563.20px;transform:scaleX(1.0127);transform-origin:0 50%;left:654.80px;">Approved</div>
<div class="t" style="font-size:12px;font-weight:normal;color:#555;line-height:16px;top:592.72px;left:492.40px;">Barcode</div>
<svg class="a" style="left:620px;top:587px" width="26" height="26"><circle cx="13" cy="13" r="11.7" fill="#fff" stroke="#8e8e8e" stroke-width="1.1"/><circle cx="8.2" cy="13" r="2" fill="#8a8a8a"/><circle cx="13" cy="13" r="2" fill="#8a8a8a"/><circle cx="17.8" cy="13" r="2" fill="#8a8a8a"/></svg>
<div class="a" style="left:653px;top:588px;width:240px;height:24px;background:#fff;border:1px solid #5c5c5c"></div>
<div class="t" style="font-size:11px;font-weight:normal;color:#8d8d8d;line-height:16px;top:151.70px;left:946.80px;">SPACE PLANNING</div>
<div class="a" style="left:1063px;top:159.0px;width:283px;height:1px;background:#9a9a9a;"></div>
<div class="t" style="font-size:12px;font-weight:normal;color:#555;line-height:16px;top:181.72px;left:945.10px;">Capacity</div>
<div class="a" style="left:1108px;top:178px;width:76px;height:24px;background:#fff;border:1px solid #5c5c5c"></div>
<div class="t" style="font-size:12px;font-weight:normal;color:#222;line-height:16px;top:182.72px;right:627.20px;">10</div>
<div class="t" style="font-size:12px;font-weight:normal;color:#555;line-height:16px;top:214.72px;left:945.10px;">Occupancy</div>
<div class="a" style="left:1108px;top:211px;width:76px;height:24px;background:#fff;border:1px solid #5c5c5c"></div>
<div class="t" style="font-size:12px;font-weight:normal;color:#222;line-height:16px;top:215.72px;right:627.20px;">3</div>
<div class="t" style="font-size:12px;font-weight:normal;color:#555;line-height:16px;top:247.72px;left:945.10px;">Available</div>
<div class="a" style="left:1108px;top:244px;width:76px;height:24px;background:#fff;border:1px solid #5c5c5c"></div>
<div class="t" style="font-size:12px;font-weight:normal;color:#3c8a2e;line-height:16px;top:248.72px;right:627.20px;">7</div>
<div class="t" style="font-size:12px;font-weight:normal;color:#333;line-height:16px;top:182.72px;left:1212.70px;">Occupied</div>
<div class="t" style="font-size:12px;font-weight:normal;color:#333;line-height:16px;top:215.72px;transform:scaleX(0.9371);transform-origin:0 50%;left:1226.40px;">Leased</div>
<div class="t" style="font-size:12px;font-weight:normal;color:#333;line-height:16px;top:248.72px;transform:scaleX(0.9772);transform-origin:0 50%;left:1227.70px;">Vacant</div>
<svg class="a" style="left:1330px;top:185px" width="12" height="12"><rect x="0.5" y="0.5" width="10.5" height="10.5" fill="#fff" stroke="#707070" stroke-width="1"/><path d="M2.3 5.6 L4.7 8.2 L9 2.6" fill="none" stroke="#111" stroke-width="2"/></svg>
<svg class="a" style="left:1330px;top:218px" width="12" height="12"><rect x="0.5" y="0.5" width="10.5" height="10.5" fill="#fff" stroke="#707070" stroke-width="1"/></svg>
<svg class="a" style="left:1330px;top:251px" width="12" height="12"><rect x="0.5" y="0.5" width="10.5" height="10.5" fill="#fff" stroke="#707070" stroke-width="1"/></svg>
<div class="t" style="font-size:12px;font-weight:normal;color:#555;line-height:16px;top:279.22px;left:945.10px;">Area</div>
<div class="a" style="left:1106px;top:275px;width:240px;height:24px;background:#fff;border:1px solid #5c5c5c"></div>
<div class="t" style="font-size:12px;font-weight:normal;color:#222;line-height:16px;top:279.72px;right:465.50px;">0.00</div>
<div class="t" style="font-size:11px;font-weight:normal;color:#8d8d8d;line-height:16px;top:308.80px;transform:scaleX(0.9616);transform-origin:0 50%;left:946.80px;">ADDRESS</div>
<div class="a" style="left:1018px;top:316.1px;width:328px;height:1px;background:#9a9a9a;"></div>
<div class="t" style="font-size:12px;font-weight:normal;color:#555;line-height:16px;top:337.72px;left:945.10px;">Address 1</div>
<div class="a" style="left:1106px;top:333px;width:240px;height:24px;background:#fff;border:1px solid #5c5c5c"></div>
<div class="t" style="font-size:12px;font-weight:normal;color:#555;line-height:16px;top:366.72px;left:945.10px;">Address 2</div>
<div class="a" style="left:1106px;top:362px;width:240px;height:24px;background:#fff;border:1px solid #5c5c5c"></div>
<div class="t" style="font-size:12px;font-weight:normal;color:#555;line-height:16px;top:395.72px;left:945.10px;">City</div>
<div class="a" style="left:1106px;top:391px;width:240px;height:24px;background:#fff;border:1px solid #5c5c5c"></div>
<div class="t" style="font-size:12px;font-weight:normal;color:#555;line-height:16px;top:424.72px;left:945.10px;">State /Zip</div>
<div class="a" style="left:1106px;top:420px;width:115px;height:24px;background:#fff;border:1px solid #5c5c5c"></div>
<div class="a" style="left:1201px;top:420px;width:1px;height:24px;background:#5c5c5c"></div>
<svg class="a" style="left:1207.5px;top:430px" width="8" height="5"><path d="M0 0 L8 0 L4 4.2 Z" fill="#1e1e1e"/></svg>
<div class="a" style="left:1231px;top:420px;width:113px;height:24px;background:#fff;border:1px solid #5c5c5c"></div>
<div class="t" style="font-size:12px;font-weight:normal;color:#555;line-height:16px;top:453.72px;left:945.10px;">Country</div>
<div class="a" style="left:1106px;top:449px;width:240px;height:24px;background:#fff;border:1px solid #5c5c5c"></div>
<div class="a" style="left:1326px;top:449px;width:1px;height:24px;background:#5c5c5c"></div>
<svg class="a" style="left:1332.5px;top:459px" width="8" height="5"><path d="M0 0 L8 0 L4 4.2 Z" fill="#1e1e1e"/></svg>
<div class="t" style="font-size:12px;font-weight:normal;color:#555;line-height:16px;top:482.72px;left:945.10px;">Phone</div>
<div class="a" style="left:1106px;top:478px;width:240px;height:24px;background:#fff;border:1px solid #5c5c5c"></div>
<div class="t" style="font-size:12px;font-weight:normal;color:#555;line-height:16px;top:511.72px;left:945.10px;">Fax</div>
<div class="a" style="left:1106px;top:507px;width:240px;height:24px;background:#fff;border:1px solid #5c5c5c"></div>
<div class="t" style="font-size:12px;font-weight:normal;color:#555;line-height:16px;top:540.72px;left:945.10px;">Geolocation</div>
<div class="a" style="left:1106px;top:536px;width:240px;height:24px;background:#fff;border:1px solid #5c5c5c"></div>
<svg class="a" style="left:1073px;top:535px" width="26" height="26"><circle cx="13" cy="13" r="11.7" fill="#fff" stroke="#8e8e8e" stroke-width="1.1"/><circle cx="8.2" cy="13" r="2" fill="#8a8a8a"/><circle cx="13" cy="13" r="2" fill="#8a8a8a"/><circle cx="17.8" cy="13" r="2" fill="#8a8a8a"/></svg>
<div class="t" style="font-size:11px;font-weight:normal;color:#8d8d8d;line-height:16px;top:569.70px;transform:scaleX(0.9849);transform-origin:0 50%;left:946.80px;">LEASING</div>
<div class="a" style="left:1014px;top:577.0px;width:332px;height:1px;background:#9a9a9a;"></div>
<svg class="a" style="left:945px;top:593px" width="26" height="26"><circle cx="13" cy="13" r="11.7" fill="#fff" stroke="#8e8e8e" stroke-width="1.1"/><circle cx="8.2" cy="13" r="2" fill="#8a8a8a"/><circle cx="13" cy="13" r="2" fill="#8a8a8a"/><circle cx="17.8" cy="13" r="2" fill="#8a8a8a"/></svg>
<div class="t" style="font-size:12px;font-weight:normal;color:#333;line-height:16px;top:598.92px;transform:scaleX(1.0185);transform-origin:0 50%;left:1228.40px;">Actual</div>
<div class="t" style="font-size:12px;font-weight:normal;color:#555;line-height:16px;top:627.72px;left:945.10px;">Gross Area</div>
<div class="a" style="left:1146px;top:623px;width:200px;height:24px;background:#fff;border:1px solid #5c5c5c"></div>
<div class="t" style="font-size:12px;font-weight:normal;color:#222;line-height:16px;top:627.72px;right:465.50px;">0.00</div>
<div class="t" style="font-size:12px;font-weight:normal;color:#555;line-height:16px;top:657.72px;left:945.10px;">Rentable</div>
<div class="a" style="left:1146px;top:653px;width:200px;height:24px;background:#fff;border:1px solid #5c5c5c"></div>
<div class="t" style="font-size:12px;font-weight:normal;color:#222;line-height:16px;top:657.72px;right:465.50px;">0.00</div>
<div class="t" style="font-size:12px;font-weight:normal;color:#555;line-height:16px;top:687.72px;left:945.10px;">Usable</div>
<div class="a" style="left:1146px;top:683px;width:200px;height:24px;background:#fff;border:1px solid #5c5c5c"></div>
<div class="t" style="font-size:12px;font-weight:normal;color:#222;line-height:16px;top:687.72px;right:465.50px;">0.00</div>
<div class="t" style="font-size:12px;font-weight:normal;color:#555;line-height:16px;top:717.72px;left:945.10px;">UOM</div>
<div class="a" style="left:1146px;top:713px;width:200px;height:24px;background:#fff;border:1px solid #5c5c5c"></div>
<div class="a" style="left:1326px;top:713px;width:1px;height:24px;background:#5c5c5c"></div>
<svg class="a" style="left:1332.5px;top:723px" width="8" height="5"><path d="M0 0 L8 0 L4 4.2 Z" fill="#1e1e1e"/></svg>
<div class="t" style="font-size:12px;font-weight:normal;color:#222;line-height:16px;top:718.22px;transform:scaleX(1.0607);transform-origin:0 50%;left:1147.40px;">sqft</div>
<svg class="a" style="left:1399px;top:148px" width="99" height="105" viewBox="0 0 99 105"><g fill="none" stroke="#8c8c8c" stroke-width="0.5" opacity="0.6">
<path d="M4.3 4.2 L97.2 4.2 M4.3 2.8 L4.3 5.6 M97.2 2.8 L97.2 5.6 M50 2.6 L50 5.8"/>
<path d="M4.5 7.7 L97.2 7.7 L97.2 98.9 L49 98.9 L49 68.6 L4.5 68.6 Z"/>
<path d="M4.5 26 L14 26 M19 26 L33 26 M38 26 L53 26 M58 26 L84 26"/>
<path d="M18 7.7 L18 26 M35.2 7.7 L35.2 26 M56 7.7 L56 26"/>
<path d="M0 32 L4.5 33.5 L4.5 41.5 L0 43 Z"/>
<path d="M25.6 68.6 L25.6 44.5 L49 44.5 L49 68.6"/>
<rect x="30" y="51" width="14" height="11" rx="4"/>
<path d="M31 49 L43 49 M31 64 L43 64"/>
<path d="M65.5 26 L65.5 41 L84.8 41 L84.8 26"/>
<path d="M84.8 41 L84.8 55 L97.2 55"/>
<path d="M72.4 54.8 L72.4 74.8 L78.6 74.8 L78.6 54.8"/>
<path d="M44.2 76.9 L49 77.5 L49 88 L44.2 88.6"/>
<path d="M49 68.6 L97.2 68.6"/>
<path d="M75 68.6 L75 98.9"/>
<path d="M8 30 L16 30 L16 40 L8 40"/>
<rect x="7" y="50" width="3" height="12"/>
<path d="M10 14 q3 2 0 5 M23 13 q3 2 0 5 M40 14 q3 2 0 5 M62 13 q3 2 0 5 M90 13 q3 2 0 5 M68 30 q3 2 0 5 M80 30 q3 2 0 5 M92 42 q3 2 0 5"/>
<path d="M8 63 q3 -4 6 0 M55 62 q3 -4 6 0 M62 66 l6 0 M17 66 l6 0 M20 48 l0 8"/>
<path d="M26 14 L32 14 L32 22 L26 22 M44 12 L52 12 L52 18"/>
<path d="M90 92 l-4 6 M58 90 l0 -10"/>
</g></svg>
<svg class="a" style="left:1498px;top:148px" width="100" height="105" viewBox="0 0 100 105"><rect width="100" height="105" fill="#a9aeac"/>
<g transform="matrix(0.765,-0.524,-0.137,-0.39,23,97.4)">
<path d="M0 0 L100 0 L100 90 L50 90 L50 150 L0 150 Z" fill="#675a69"/>
<path d="M6 18 L100 18 L100 90 L50 90 L50 150 L6 150 Z" fill="#a4afa9"/>
<rect x="10" y="24" width="15" height="20" fill="#cdb894"/>
<rect x="30" y="26" width="18" height="20" fill="#cbb692"/>
<rect x="56" y="24" width="16" height="18" fill="#b9c2bc"/>
<rect x="78" y="26" width="18" height="18" fill="#b5bfb9"/>
<rect x="10" y="56" width="13" height="30" fill="#c9b48e"/>
<rect x="28" y="56" width="18" height="32" fill="#d0bb96"/>
<rect x="52" y="58" width="22" height="28" fill="#9aa69f"/>
<rect x="56" y="64" width="14" height="10" fill="#d4bf94"/>
<rect x="78" y="54" width="18" height="32" fill="#cfb993"/>
<rect x="10" y="94" width="37" height="52" fill="#9ca39e"/>
<rect x="18" y="96" width="28" height="9" fill="#3f3b3a" opacity="0.7"/>
<rect x="20" y="108" width="26" height="34" fill="#8e8275"/>
<g fill="none" stroke="#e2e7e4" stroke-width="1.2" vector-effect="non-scaling-stroke">
<path d="M6 18 L100 18 L100 90 L50 90 L50 150 L6 150 Z"/>
<path d="M6 50 L100 50 M27 18 L27 50 M52 18 L52 50 M76 18 L76 50 M25 50 L25 90 M49 50 L49 90 M75 50 L75 90 M6 90 L50 90 M15 90 L15 150"/>
</g>
<g fill="#4a4646" opacity="0.55"><rect x="84" y="72" width="8" height="6"/><rect x="33" y="66" width="8" height="10"/><rect x="60" y="30" width="10" height="4"/><rect x="80" y="32" width="8" height="4"/></g>
<g fill="#f0eff2"><rect x="12" y="5" width="4" height="7"/><rect x="36" y="5" width="4" height="7"/><rect x="44" y="5" width="4" height="7"/><rect x="52" y="5" width="4" height="7"/><rect x="68" y="5" width="4" height="7"/><rect x="76" y="5" width="4" height="7"/><rect x="85" y="5" width="4" height="7"/><rect x="93" y="5" width="4" height="7"/></g>
</g></svg>
<svg class="a" style="left:1598px;top:148px" width="100" height="105" viewBox="0 0 100 105"><defs><linearGradient id="sky1" x1="0" y1="0" x2="0" y2="1"><stop offset="0" stop-color="#2b7fcd"/><stop offset="1" stop-color="#4f9bd8"/></linearGradient>
<linearGradient id="gl1" x1="0" y1="0" x2="1" y2="0"><stop offset="0" stop-color="#a9bccc"/><stop offset="1" stop-color="#c6d3de"/></linearGradient>
<linearGradient id="gl2" x1="0" y1="0" x2="1" y2="0"><stop offset="0" stop-color="#d4e0ea"/><stop offset="1" stop-color="#aebfce"/></linearGradient></defs>
<rect width="100" height="105" fill="url(#sky1)"/>
<g fill="#e8f0f8" opacity="0.7"><ellipse cx="16" cy="48" rx="9" ry="6"/><ellipse cx="80" cy="70" rx="16" ry="5"/><ellipse cx="70" cy="64" rx="8" ry="3"/></g>
<path d="M0 22 L10 28 L10 105 L0 105 Z" fill="#9fb4c6"/>
<path d="M0 22 L10 28 L10 31 L0 25 Z" fill="#6f6660"/>
<rect x="6.5" y="28" width="1.6" height="77" fill="#e2e6ea"/>
<path d="M12 56 L22 53 L22 100 L12 100 Z" fill="#b39c74"/>
<path d="M22 24 L36.5 17.5 L36.5 100 L22 100 Z" fill="url(#gl1)"/>
<path d="M22 21.5 L36.5 15.5 L36.5 19.5 L22 26 Z" fill="#7d6f63"/>
<path d="M36.5 12 L40.6 6.8 L61.6 34.5 L63 100 L36.5 100 Z" fill="url(#gl2)"/>
<g stroke="#8fa3b4" stroke-width="0.5" opacity="0.8"><path d="M22 32 L63 38 M22 40 L63 45 M22 48 L63 52 M22 56 L63 59 M22 64 L63 66 M22 72 L63 73 M22 80 L63 80 M22 88 L63 87"/></g>
<rect x="47.8" y="24" width="2" height="76" fill="#3f4d5c"/>
<rect x="56.8" y="38" width="1.6" height="62" fill="#5a6a7a"/>
<path d="M63 64 L79 67 L79 100 L63 100 Z" fill="#a9bfd0"/>
<path d="M73 78 L100 75 L100 100 L73 100 Z" fill="#ad5e48"/>
<g fill="#e8e0dc"><rect x="80" y="84" width="2.5" height="3"/><rect x="90" y="84" width="2.5" height="3"/></g>
<g fill="#3f6a32"><circle cx="14" cy="93" r="4"/><circle cx="24" cy="94" r="3"/><circle cx="32" cy="94" r="3"/><circle cx="53" cy="94" r="2.5"/><circle cx="60" cy="94" r="2.5"/><circle cx="88" cy="92" r="4"/><circle cx="98" cy="90" r="3"/></g>
<rect x="0" y="99" width="100" height="6" fill="#5a5a60"/>
<g fill="#9a3a3a"><rect x="22" y="101" width="4" height="2"/><rect x="74" y="101" width="4" height="2"/></g></svg>
<svg class="a" style="left:1698px;top:148px" width="100" height="105" viewBox="0 0 100 105"><defs><linearGradient id="sky2" x1="0" y1="0.85" x2="0.9" y2="0"><stop offset="0" stop-color="#efeef4"/><stop offset="0.5" stop-color="#a6a7d3"/><stop offset="1" stop-color="#4d55a6"/></linearGradient></defs>
<rect width="100" height="105" fill="url(#sky2)"/>
<path d="M0 84 Q10 82 20 85 L20 96 L0 96 Z" fill="#7d9c68"/>
<rect x="37" y="13" width="21" height="6" fill="#c4c6cc"/>
<rect x="24" y="19" width="47" height="53" fill="#d6d9e0"/>
<g fill="#9ba1ab"><rect x="24" y="27" width="47" height="3"/><rect x="24" y="34" width="47" height="3"/><rect x="24" y="41" width="47" height="3"/><rect x="24" y="48" width="47" height="3"/><rect x="24" y="55" width="47" height="3"/><rect x="24" y="62" width="47" height="3"/></g>
<g fill="#d8c68a"><rect x="40" y="29" width="16" height="3"/><rect x="40" y="36" width="16" height="3"/><rect x="40" y="43" width="16" height="3"/><rect x="40" y="50" width="16" height="3"/><rect x="40" y="57" width="16" height="3"/><rect x="40" y="64" width="16" height="3"/></g>
<rect x="37.5" y="19" width="2.2" height="52" fill="#6e7480"/>
<rect x="71" y="41" width="8" height="47" fill="#dfe3ea"/>
<rect x="71" y="55" width="8" height="2.5" fill="#8fa4b4"/>
<rect x="19" y="69" width="53" height="27" fill="#e4e2da"/>
<g fill="#c6ae6c"><rect x="21" y="72" width="5" height="13"/><rect x="28" y="72" width="11" height="13"/><rect x="42" y="72" width="12" height="13"/><rect x="57" y="72" width="13" height="13"/></g>
<rect x="28" y="88" width="12" height="8" fill="#b8b2a8"/>
<rect x="49" y="88" width="3" height="8" fill="#d2b878"/><rect x="62" y="88" width="3" height="8" fill="#d2b878"/>
<path d="M0 94 L20 96 L100 100 L100 105 L0 105 Z" fill="#6a4628"/>
<g fill="#516b40"><path d="M23 76 L28 92 L18 92 Z"/><path d="M47 78 L52 93 L42 93 Z"/><path d="M64 78 L69 93 L59 93 Z"/><path d="M85 80 L90 95 L80 95 Z"/></g></svg>
<div class="t" style="font-size:11px;font-weight:normal;color:#8d8d8d;line-height:16px;top:267.80px;left:1399.40px;">LINEAR DEFINITION</div>
<div class="a" style="left:1525px;top:275.1px;width:273px;height:1px;background:#9a9a9a;"></div>
<svg class="a" style="left:1397px;top:291px" width="26" height="26"><circle cx="13" cy="13" r="11.7" fill="#fff" stroke="#8e8e8e" stroke-width="1.1"/><circle cx="8.2" cy="13" r="2" fill="#8a8a8a"/><circle cx="13" cy="13" r="2" fill="#8a8a8a"/><circle cx="17.8" cy="13" r="2" fill="#8a8a8a"/></svg>
<div class="t" style="font-size:12px;font-weight:normal;color:#555;line-height:16px;top:296.72px;transform:scaleX(0.9071);transform-origin:0 50%;left:1710.40px;">DIRECTION</div>
<div class="t" style="font-size:12px;font-weight:normal;color:#555;line-height:16px;top:325.72px;left:1397.40px;">Begin</div>
<div class="a" style="left:1558px;top:321px;width:120px;height:24px;background:#fff;border:1px solid #5c5c5c"></div>
<div class="a" style="left:1688px;top:321px;width:110px;height:24px;background:#fff;border:1px solid #5c5c5c"></div>
<div class="a" style="left:1778px;top:321px;width:1px;height:24px;background:#5c5c5c"></div>
<svg class="a" style="left:1784.5px;top:331px" width="8" height="5"><path d="M0 0 L8 0 L4 4.2 Z" fill="#1e1e1e"/></svg>
<div class="t" style="font-size:12px;font-weight:normal;color:#555;line-height:16px;top:354.72px;left:1397.40px;">End</div>
<div class="a" style="left:1558px;top:350px;width:120px;height:24px;background:#fff;border:1px solid #5c5c5c"></div>
<div class="a" style="left:1688px;top:350px;width:110px;height:24px;background:#fff;border:1px solid #5c5c5c"></div>
<div class="a" style="left:1778px;top:350px;width:1px;height:24px;background:#5c5c5c"></div>
<svg class="a" style="left:1784.5px;top:360px" width="8" height="5"><path d="M0 0 L8 0 L4 4.2 Z" fill="#1e1e1e"/></svg>
<div class="t" style="font-size:12px;font-weight:normal;color:#555;line-height:16px;top:383.72px;left:1397.40px;">Approx. Length</div>
<div class="a" style="left:1558px;top:379px;width:120px;height:24px;background:#fff;border:1px solid #5c5c5c"></div>
<div class="a" style="left:1688px;top:379px;width:110px;height:24px;background:#fff;border:1px solid #5c5c5c"></div>
<div class="a" style="left:1778px;top:379px;width:1px;height:24px;background:#5c5c5c"></div>
<svg class="a" style="left:1784.5px;top:389px" width="8" height="5"><path d="M0 0 L8 0 L4 4.2 Z" fill="#1e1e1e"/></svg>
<div class="t" style="font-size:12px;font-weight:normal;color:#222;line-height:16px;top:383.72px;right:132.80px;">0.00</div>
<div class="t" style="font-size:11px;font-weight:normal;color:#222;line-height:16px;top:384.20px;left:1689.40px;">lnft</div>
<div class="t" style="font-size:12px;font-weight:normal;color:#555;line-height:16px;top:412.72px;left:1397.40px;">Area</div>
<div class="a" style="left:1558px;top:408px;width:120px;height:24px;background:#fff;border:1px solid #5c5c5c"></div>
<div class="a" style="left:1688px;top:408px;width:110px;height:24px;background:#fff;border:1px solid #5c5c5c"></div>
<div class="a" style="left:1778px;top:408px;width:1px;height:24px;background:#5c5c5c"></div>
<svg class="a" style="left:1784.5px;top:418px" width="8" height="5"><path d="M0 0 L8 0 L4 4.2 Z" fill="#1e1e1e"/></svg>
<div class="t" style="font-size:12px;font-weight:normal;color:#222;line-height:16px;top:412.72px;right:132.80px;">0.00</div>
<div class="t" style="font-size:11px;font-weight:normal;color:#222;line-height:16px;top:413.20px;left:1689.40px;">sqft</div>
<div class="a" style="left:452.2px;top:453.2px;width:27.5px;height:27.3px;background:transparent;border:1.3px solid #d4d4d4;"></div>
<div class="a" style="left:464.9px;top:458.5px;width:1.8px;height:2px;background:#4b5cad"></div>
<div class="a" style="left:464.9px;top:462.5px;width:1.8px;height:2px;background:#4b5cad"></div>
<div class="a" style="left:464.9px;top:466.5px;width:1.8px;height:2px;background:#4b5cad"></div>
<div class="a" style="left:464.9px;top:470.5px;width:1.8px;height:2px;background:#4b5cad"></div>
<div class="a" style="left:464.9px;top:474.5px;width:1.8px;height:2px;background:#4b5cad"></div>
<svg class="a" style="left:0;top:0;z-index:50" width="1809" height="799">
<g stroke="#6cb33e" stroke-width="1.25" fill="none">
<line x1="214.8" y1="31.5" x2="270.3" y2="11.9"/>
<line x1="214.8" y1="79.6" x2="476.5" y2="7.5"/>
<line x1="214.5" y1="124.5" x2="486.8" y2="44.2"/>
<line x1="214.5" y1="170.4" x2="479.8" y2="90.2"/>
<line x1="214.5" y1="216.5" x2="485.5" y2="143.5"/>
<line x1="212.2" y1="274.7" x2="454" y2="455"/>
</g></svg>
</body></html>
